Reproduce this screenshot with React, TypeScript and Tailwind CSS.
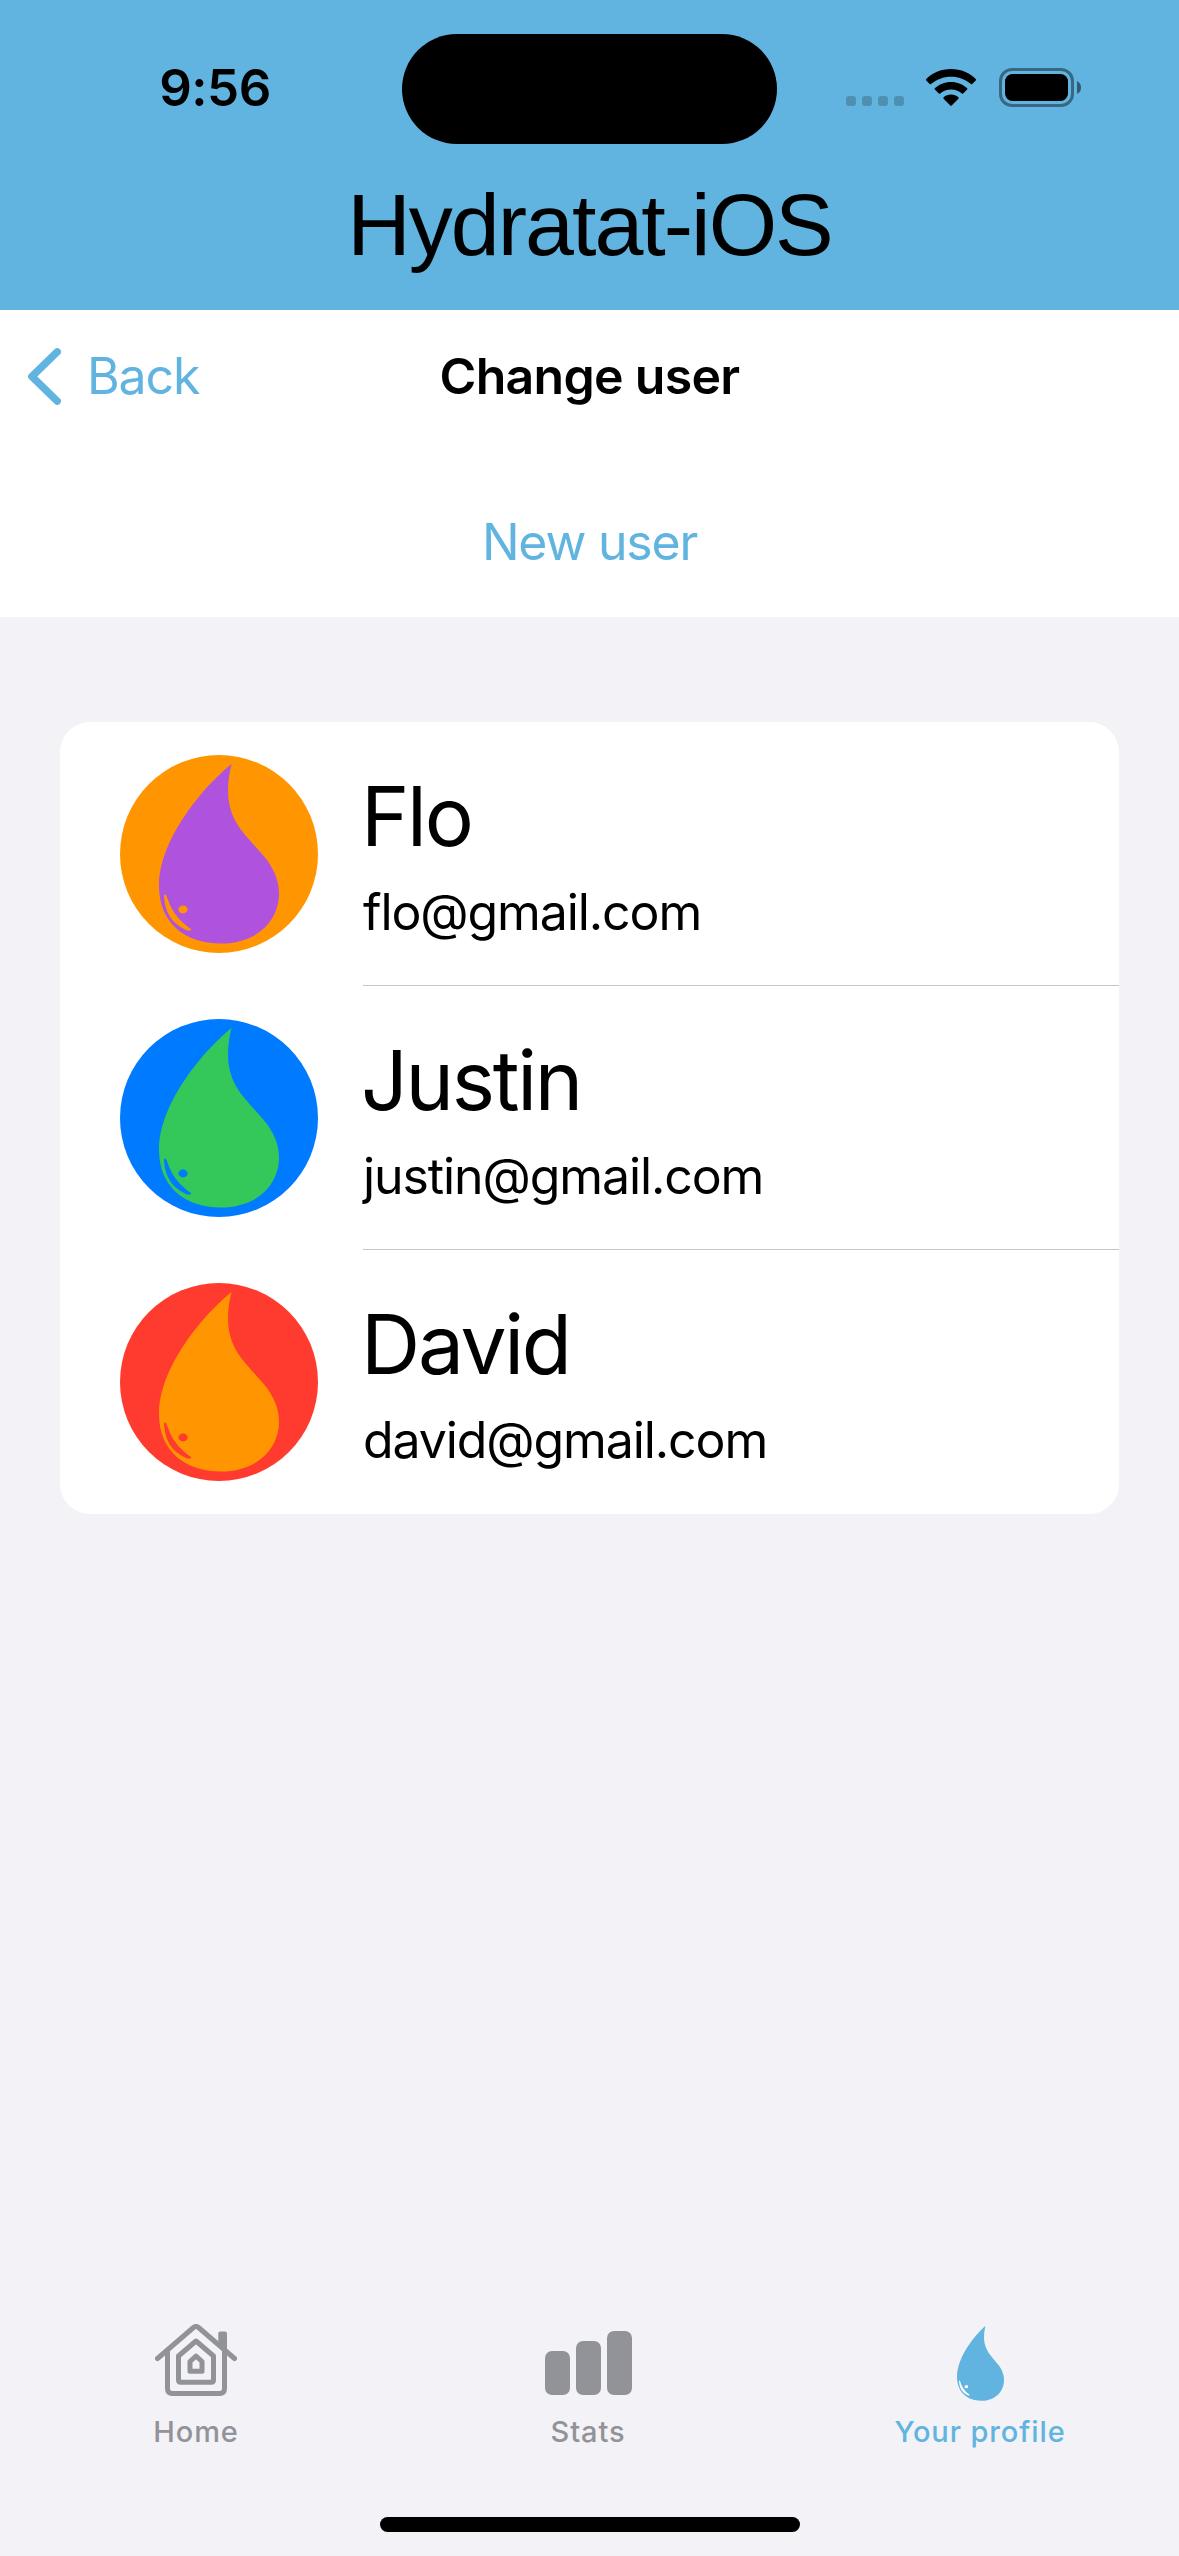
import React from "react";

type User = {
  name: string;
  email: string;
  disc: string;
  drop: string;
};

const users: User[] = [
  { name: "Flo", email: "flo@gmail.com", disc: "#ff9500", drop: "#af52de" },
  { name: "Justin", email: "justin@gmail.com", disc: "#007aff", drop: "#34c759" },
  { name: "David", email: "david@gmail.com", disc: "#ff3b30", drop: "#ff9500" },
];

const DROP =
  "M72.5 0C70 10 67 28 71 43C76 65 95 79 108 96C117 109 120 119 120 130C120 155 100 179.500 62 179.500C25 179.500 0 158 0 122C0 75 45 22 72.500 0Z";

function Drop({ color, shine, className }: { color: string; shine: string; className: string }) {
  return (
    <svg viewBox="0 0 120 180" className={className} preserveAspectRatio="none">
      <path d={DROP} fill={color} />
      <path d="M5 131.500Q6 129.500 7.500 132Q12 145 17 151Q22 158 32.500 165.500Q31 167.500 27 166Q6 157 5 131.500Z" fill={shine} />
      <ellipse cx="24" cy="145.500" rx="4.600" ry="3.900" fill={shine} />
    </svg>
  );
}

function StatusBar() {
  return (
    <div className="flex h-[178px] items-start">
      <div className="flex w-[402px] justify-center pl-[28px] pt-[58px]">
        <span className="text-[51px] font-semibold leading-[60px] tracking-[-0.5px]">9:56</span>
      </div>
      <div className="mt-[34px] h-[110px] w-[375px] rounded-full bg-black" />
      <div className="flex pl-[69px] pt-[68px]">
        <div className="mt-[28px] flex gap-[6px]">
          {[0, 1, 2, 3].map((i) => (
            <i key={i} className="h-[10px] w-[10px] rounded-[3px] bg-black/20" />
          ))}
        </div>
        <svg viewBox="0 0 50 38" className="ml-[22px] mt-px h-[38px] w-[50px]">
          <path d="M25 0C35 0 44 4 50 10.300Q50.300 11 49.700 11.600L46.300 15Q45.600 15.600 45 15C39.500 10.300 32.500 7.700 25 7.700S10.500 10.300 5 15Q4.400 15.600 3.700 15L0.300 11.600Q-0.300 11 0 10.300C6 4 15 0 25 0Z" />
          <path d="M25 12.900C31.300 12.900 37 15.300 41.300 19.300Q41.700 20 41.100 20.600L37.200 24.400Q36.500 25 35.800 24.400C32.900 21.900 29.100 20.500 25 20.500S17.100 21.900 14.200 24.400Q13.500 25 12.800 24.400L8.900 20.600Q8.300 20 8.700 19.300C13 15.300 18.700 12.900 25 12.900Z" />
          <path d="M25 25.600C27.800 25.600 30.400 26.600 32.400 28.300Q33 29 32.400 29.700L25.700 36.600Q25 37.200 24.300 36.600L17.600 29.700Q17 29 17.600 28.300C19.600 26.600 22.200 25.600 25 25.600Z" />
        </svg>
        <svg viewBox="0 0 82 39" className="ml-[23px] h-[39px] w-[82px]">
          <rect x="1.500" y="1.500" width="72" height="36" rx="11.500" fill="none" stroke="#000" strokeOpacity=".42" strokeWidth="3" />
          <rect x="6" y="6" width="63" height="27" rx="7.500" />
          <path d="M78 13Q82 15 82 19.500T78 26Z" fillOpacity=".5" />
        </svg>
      </div>
    </div>
  );
}

function UserRow({ user, last }: { user: User; last: boolean }) {
  return (
    <div className="flex h-[264px] pl-[60px]">
      <div className="mt-[33px] flex h-[198px] w-[198px] shrink-0 justify-center rounded-full pt-[9px]" style={{ backgroundColor: user.disc }}>
        <Drop color={user.drop} shine={user.disc} className="h-[180px] w-[120px]" />
      </div>
      <div className={last ? "ml-[45px] flex-1 pt-[45px]" : "ml-[45px] flex-1 border-b border-[#c6c6c8] pt-[45px]"}>
        <div className="-ml-[2px] text-[82px] leading-[100px] tracking-[-2.3px]">{user.name}</div>
        <div className="mt-[15px] text-[50px] leading-[60px] tracking-[-1.1px]">{user.email}</div>
      </div>
    </div>
  );
}

function HomeIcon() {
  return (
    <svg viewBox="0 0 82 78" className="h-[78px] w-[82px]" fill="none" stroke="currentColor" strokeWidth="5" strokeLinecap="round" strokeLinejoin="round">
      <path d="M2.500 34.500L38.500 3.500Q41 1.500 43.500 3.500L79.500 34.500" />
      <path d="M12.500 28V64.500Q12.500 69.500 17.500 69.500H64.500Q69.500 69.500 69.500 64.500V28" />
      <path d="M63.300 19V9.500Q63.300 7.500 65.300 7.500H70Q72 7.500 72 9.500V27Z" fill="currentColor" stroke="none" />
      <path d="M41 17L23.500 32V56Q23.500 58.200 25.700 58.200H56.300Q58.500 58.200 58.500 56V32Z" />
      <path d="M41 32L35 37.500V47.200H47V37.500Z" />
    </svg>
  );
}

function StatsIcon() {
  return (
    <div className="flex h-[78px] items-end gap-[6px] pb-[7px]">
      <i className="h-[44px] w-[25px] rounded-[7px] bg-current" />
      <i className="h-[54px] w-[25px] rounded-[7px] bg-current" />
      <i className="h-[64px] w-[25px] rounded-[7px] bg-current" />
    </div>
  );
}

function Tab({ label, active, children }: { label: string; active?: boolean; children: React.ReactNode }) {
  return (
    <div className={`flex flex-col items-center ${active ? "text-[#61b4df]" : "text-[#929398]"}`}>
      {children}
      <span className="mt-[12px] text-[29px] font-medium leading-[36px] tracking-[0.9px]">{label}</span>
    </div>
  );
}

export default function App() {
  return (
    <div className="flex h-[2556px] w-[1179px] flex-col overflow-hidden bg-[#f2f2f7] font-['Inter',sans-serif] text-black">
      <header className="h-[310px] bg-[#61b4df]">
        <StatusBar />
        <h1 className="pt-px text-center font-['Liberation_Sans',sans-serif] text-[88px] font-normal leading-[92px] tracking-[-2px]">Hydratat-iOS</h1>
      </header>

      <section className="h-[307px] bg-white">
        <nav className="grid h-[132px] grid-cols-3 items-center">
          <div className="flex items-center pl-[28px] text-[#61b4df]">
            <svg viewBox="0 0 33 57" className="h-[57px] w-[33px]" fill="none" stroke="currentColor" strokeWidth="7.500" strokeLinecap="round" strokeLinejoin="round">
              <path d="M29.200 3.900L3.900 28.500L29.200 53.100" />
            </svg>
            <span className="ml-[26px] text-[50px] leading-[60px] tracking-[-1.1px]">Back</span>
          </div>
          <h2 className="whitespace-nowrap text-center text-[50px] font-semibold leading-[60px] tracking-[-0.7px]">Change user</h2>
        </nav>
        <div className="mt-[70px] text-center text-[50px] leading-[60px] tracking-[-1.200px] text-[#61b4df]">New user</div>
      </section>

      <main className="flex-1 px-[60px] pt-[105px]">
        <div className="overflow-hidden rounded-[30px] bg-white">
          {users.map((u, i) => (
            <UserRow key={u.name} user={u} last={i === users.length - 1} />
          ))}
        </div>
      </main>

      <footer className="h-[232px]">
        <div className="grid h-[193px] grid-cols-3 pr-[3px]">
          <Tab label="Home"><HomeIcon /></Tab>
          <Tab label="Stats"><StatsIcon /></Tab>
          <Tab label="Your profile" active>
            <div className="h-[78px] pt-[2px]">
              <Drop color="#61b4df" shine="#ffffff" className="h-[75px] w-[47px]" />
            </div>
          </Tab>
        </div>
        <div className="mx-auto h-[15px] w-[420px] rounded-full bg-black" />
      </footer>
    </div>
  );
}
